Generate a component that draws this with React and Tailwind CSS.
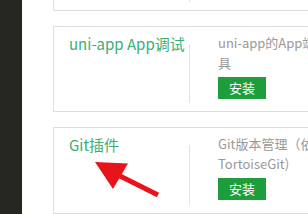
const plugins = [
  { name: "App真机运行", desc: "uni-app真机运行调试插件" },
  { name: "uni-app App调试", desc: "uni-app的App端调试工具" },
  { name: "Git插件", desc: "Git版本管理（依赖TortoiseGit)" },
];

const PluginCard = ({ name, desc }) => (
  <div className="flex w-[330px] h-[87px] border border-[#dedede] bg-white">
    <div className="w-[135px] shrink-0 pl-[15px] pt-[6px]">
      <h3 className="text-[15px] leading-[22px] text-[#3aae74] whitespace-nowrap">{name}</h3>
    </div>
    <div className="w-px shrink-0 bg-[#e3e3e3] mt-[17px] mb-[8px]" />
    <div className="w-[168px] shrink-0 pl-[28px] pt-[6px]">
      <p className="text-[13px] leading-[20px] text-[#999]">{desc}</p>
      <button className="mt-[4px] w-[48px] h-[22px] bg-[#1e9e3b] text-white text-[13px] leading-[22px]">安装</button>
    </div>
  </div>
);

export default function App() {
  return (
    <div
      className="relative flex w-[308px] h-[214px] overflow-hidden bg-white"
      style={{ fontFamily: '"Noto Sans CJK SC", "Noto Sans", sans-serif' }}
    >
      <div className="w-[22px] shrink-0 bg-[#262622]" />
      <div className="pl-[31px] -mt-[76px] flex flex-col gap-[15px]">
        {plugins.map((p) => (
          <PluginCard key={p.name} {...p} />
        ))}
      </div>

      {/* red arrow annotation */}
      <svg className="absolute left-0 top-0 pointer-events-none" width="308" height="214" viewBox="0 0 308 214">
        <line x1="120" y1="176" x2="158" y2="195" stroke="#e8141c" strokeWidth="5" />
        <polygon points="95,162 128,163.5 113,189" fill="#e8141c" />
      </svg>
    </div>
  );
}
